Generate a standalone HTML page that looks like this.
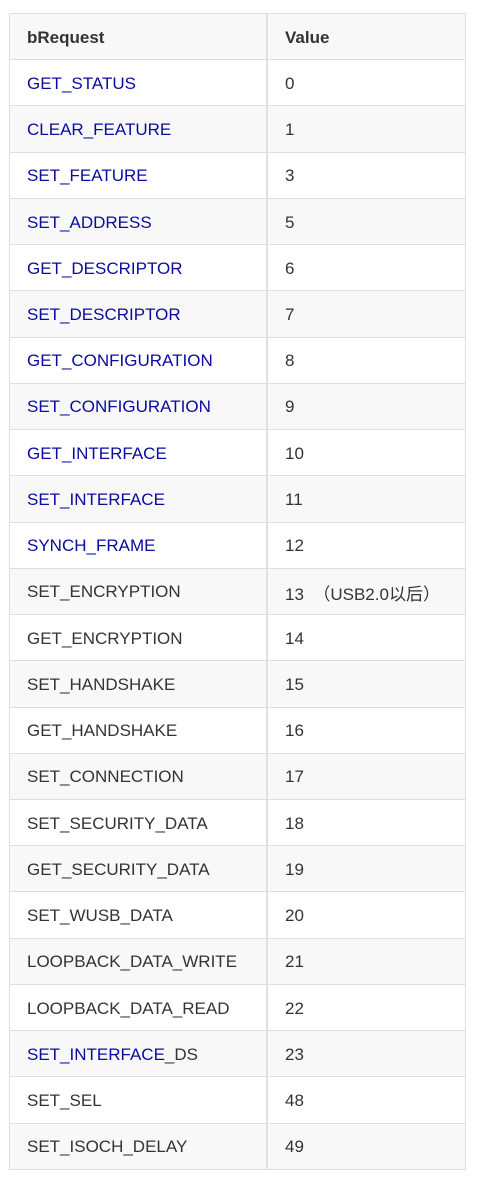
<!DOCTYPE html>
<html><head><meta charset="utf-8"><style>
body{margin:0;background:#fff;width:481px;height:1186px;position:relative;font-family:"Liberation Sans","Noto Sans CJK SC",sans-serif;font-size:17px;color:#333}
table{position:absolute;left:9px;top:13px;width:457px;border-collapse:collapse;table-layout:fixed}
td{height:43.24px;border:1px solid #dfdfdf;padding:2px 0 0 17px;vertical-align:middle;white-space:nowrap}
td:first-child{width:239px;border-right:2px solid #e0e0e0}
tr:nth-child(odd){background:#f8f8f8}
tr:first-child td{font-weight:bold}
.b{color:#0a0aa0}
</style></head><body>
<table>
<tr><td>bRequest</td><td>Value</td></tr>
<tr><td class=b>GET_STATUS</td><td>0</td></tr>
<tr><td class=b>CLEAR_FEATURE</td><td>1</td></tr>
<tr><td class=b>SET_FEATURE</td><td>3</td></tr>
<tr><td class=b>SET_ADDRESS</td><td>5</td></tr>
<tr><td class=b>GET_DESCRIPTOR</td><td>6</td></tr>
<tr><td class=b>SET_DESCRIPTOR</td><td>7</td></tr>
<tr><td class=b>GET_CONFIGURATION</td><td>8</td></tr>
<tr><td class=b>SET_CONFIGURATION</td><td>9</td></tr>
<tr><td class=b>GET_INTERFACE</td><td>10</td></tr>
<tr><td class=b>SET_INTERFACE</td><td>11</td></tr>
<tr><td class=b>SYNCH_FRAME</td><td>12</td></tr>
<tr><td>SET_ENCRYPTION</td><td>13&nbsp;&nbsp;（USB2.0以后）</td></tr>
<tr><td>GET_ENCRYPTION</td><td>14</td></tr>
<tr><td>SET_HANDSHAKE</td><td>15</td></tr>
<tr><td>GET_HANDSHAKE</td><td>16</td></tr>
<tr><td>SET_CONNECTION</td><td>17</td></tr>
<tr><td>SET_SECURITY_DATA</td><td>18</td></tr>
<tr><td>GET_SECURITY_DATA</td><td>19</td></tr>
<tr><td>SET_WUSB_DATA</td><td>20</td></tr>
<tr><td>LOOPBACK_DATA_WRITE</td><td>21</td></tr>
<tr><td>LOOPBACK_DATA_READ</td><td>22</td></tr>
<tr><td><span class=b>SET_INTERFACE</span>_DS</td><td>23</td></tr>
<tr><td>SET_SEL</td><td>48</td></tr>
<tr><td>SET_ISOCH_DELAY</td><td>49</td></tr>
</table>
</body></html>
